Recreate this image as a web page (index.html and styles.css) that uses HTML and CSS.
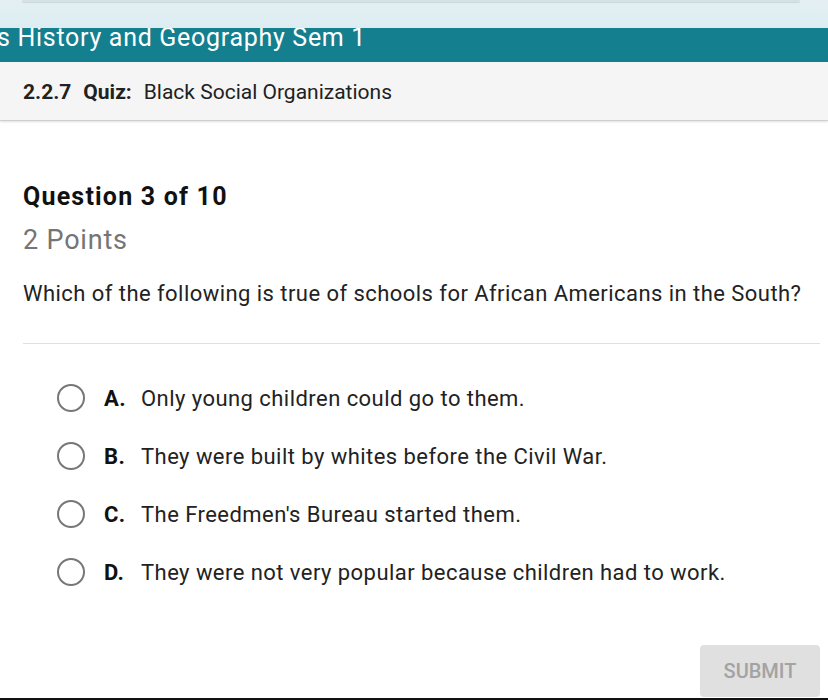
FILE: index.html
```html
<!DOCTYPE html>
<html>
<head>
<meta charset="utf-8">
<link rel="stylesheet" href="styles.css">
</head>
<body>
<div class="page">
  <div class="topstrip"><div class="topbar"></div></div>
  <div class="course"><span class="course-text">s History and Geography Sem 1</span></div>
  <div class="subhead"><span class="num">2.2.7</span><span class="quiz">Quiz:</span><span class="title">Black Social Organizations</span></div>
  <main class="content">
    <h1 class="qnum">Question 3 of 10</h1>
    <div class="points">2 Points</div>
    <p class="prompt">Which of the following is true of schools for African Americans in the South?</p>
    <hr class="rule">
    <ul class="options">
      <li class="opt"><span class="radio"></span><span class="letter">A.</span><span class="text">Only young children could go to them.</span></li>
      <li class="opt"><span class="radio"></span><span class="letter">B.</span><span class="text">They were built by whites before the Civil War.</span></li>
      <li class="opt"><span class="radio"></span><span class="letter">C.</span><span class="text">The Freedmen's Bureau started them.</span></li>
      <li class="opt"><span class="radio"></span><span class="letter">D.</span><span class="text">They were not very popular because children had to work.</span></li>
    </ul>
    <div class="actions"><button class="submit">SUBMIT</button></div>
  </main>
  <div class="bottomline"></div>
</div>
</body>
</html>
```
FILE: styles.css
```css
* { box-sizing: border-box; }
html, body { margin: 0; padding: 0; }
body { font-family: Roboto, "Noto Sans", sans-serif; background: #fff; color: #212121; width: 828px; height: 700px; overflow: hidden; }
.page { display: flex; flex-direction: column; height: 700px; }
.topstrip { height: 28px; background: linear-gradient(#e4eff3, #dcedf2); padding: 0 28px 0 22px; flex: none; }
.topbar { height: 2px; background: #d2e2e8; border-radius: 0 0 10px 10px; box-shadow: 0 1px 1px rgba(0,0,0,0.1); }
.course { height: 34px; background: #137f8f; color: #fff; overflow: hidden; white-space: nowrap; flex: none; }
.course-text { display: block; font-size: 25px; line-height: 20px; letter-spacing: 0.7px; margin-left: -3px; }
.subhead { height: 59px; background: #f5f5f5; border-bottom: 1px solid #cfcfcf; box-shadow: 0 1px 2px rgba(0,0,0,0.12); display: flex; align-items: center; padding: 2px 0 0 23px; font-size: 21px; color: #212121; flex: none; }
.num { font-weight: 700; margin-right: 12px; }
.quiz { font-weight: 700; margin-right: 12px; }
.title { font-weight: 400; }
.content { flex: 1; padding: 0 8px 0 23px; display: flex; flex-direction: column; }
.qnum { margin: 61px 0 0; font-size: 25px; font-weight: 700; letter-spacing: 1.2px; line-height: 30px; color: #111; }
.points { margin-top: 12px; font-size: 27px; color: #757575; line-height: 32px; letter-spacing: 0.8px; }
.prompt { margin: 23px 0 0; font-size: 22px; line-height: 30px; color: #222; letter-spacing: 0.45px; }
.rule { margin: 34px 0 0; border: 0; border-top: 1px solid #e0e0e0; height: 0; }
.options { list-style: none; margin: 40px 0 0; padding: 0 0 0 34px; display: flex; flex-direction: column; gap: 30px; }
.opt { display: flex; align-items: center; height: 28px; font-size: 22px; color: #222; letter-spacing: 0.45px; }
.radio { width: 28px; height: 28px; border: 2.5px solid #777; border-radius: 50%; margin-right: 19px; flex: none; }
.letter { font-weight: 700; width: 37px; flex: none; color: #111; }
.actions { margin-top: auto; display: flex; justify-content: flex-end; padding-bottom: 1px; }
.submit { width: 120px; height: 52px; background: #e0e0e0; border: 0; border-radius: 4px; color: #a3a3a3; font-family: Roboto, sans-serif; font-size: 20px; font-weight: 500; }
.bottomline { height: 2px; background: #111; flex: none; }
```
